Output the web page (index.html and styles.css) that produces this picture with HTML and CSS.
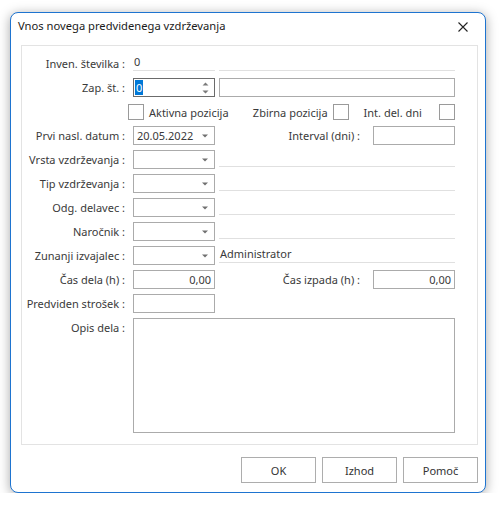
FILE: index.html
```html
<!DOCTYPE html>
<html lang="sl">
<head>
    <meta charset="UTF-8">
    <meta name="viewport" content="width=device-width, initial-scale=1.0">
    <title>Vnos novega predvidenega vzdrževanja</title>
    <link rel="stylesheet" href="styles.css">
</head>
<body>
    <div class="window">
        <!-- Title bar -->
        <div class="titlebar">
            <span class="title">Vnos novega predvidenega vzdrževanja</span>
            <svg class="close" width="10" height="10" viewBox="0 0 10 10">
                <path d="M0.5 0.5 L9.5 9.5 M9.5 0.5 L0.5 9.5" stroke="#222" stroke-width="1.1" fill="none"/>
            </svg>
        </div>

        <!-- Form -->
        <div class="panel">
            <div class="row">
                <span class="label">Inven. številka :</span>
                <span class="field short">0</span>
                <span class="field long"></span>
            </div>

            <div class="row">
                <span class="label">Zap. št. :</span>
                <div class="input short focus">
                    <span class="sel">0</span>
                    <svg class="spin" width="7" height="12" viewBox="0 0 7 12">
                        <path d="M3.5 0.5 L6.5 3.5 L0.5 3.5 Z M0.5 8.5 L6.5 8.5 L3.5 11.5 Z" fill="#7a7a7a"/>
                    </svg>
                </div>
                <div class="input long"></div>
            </div>

            <div class="row checks">
                <div class="check-item first">
                    <span class="box"></span>
                    <span class="check-text">Aktivna pozicija</span>
                </div>
                <div class="check-item second">
                    <span class="check-text">Zbirna pozicija</span>
                    <span class="box"></span>
                </div>
                <div class="check-item third">
                    <span class="check-text">Int. del. dni</span>
                    <span class="box"></span>
                </div>
            </div>

            <div class="row">
                <span class="label">Prvi nasl. datum :</span>
                <div class="input short combo">
                    <span class="value">20.05.2022</span>
                    <svg class="arrow" width="6" height="4" viewBox="0 0 6 4"><path d="M0 0.5 H6 L3 3.5 Z" fill="#707070"/></svg>
                </div>
                <span class="label side">Interval (dni) :</span>
                <div class="input short"></div>
            </div>

            <div class="row">
                <span class="label">Vrsta vzdrževanja :</span>
                <div class="input short combo">
                    <span class="value"></span>
                    <svg class="arrow" width="6" height="4" viewBox="0 0 6 4"><path d="M0 0.5 H6 L3 3.5 Z" fill="#707070"/></svg>
                </div>
                <span class="field long"></span>
            </div>

            <div class="row">
                <span class="label">Tip vzdrževanja :</span>
                <div class="input short combo">
                    <span class="value"></span>
                    <svg class="arrow" width="6" height="4" viewBox="0 0 6 4"><path d="M0 0.5 H6 L3 3.5 Z" fill="#707070"/></svg>
                </div>
                <span class="field long"></span>
            </div>

            <div class="row">
                <span class="label">Odg. delavec :</span>
                <div class="input short combo">
                    <span class="value"></span>
                    <svg class="arrow" width="6" height="4" viewBox="0 0 6 4"><path d="M0 0.5 H6 L3 3.5 Z" fill="#707070"/></svg>
                </div>
                <span class="field long"></span>
            </div>

            <div class="row">
                <span class="label">Naročnik :</span>
                <div class="input short combo">
                    <span class="value"></span>
                    <svg class="arrow" width="6" height="4" viewBox="0 0 6 4"><path d="M0 0.5 H6 L3 3.5 Z" fill="#707070"/></svg>
                </div>
                <span class="field long"></span>
            </div>

            <div class="row">
                <span class="label">Zunanji izvajalec :</span>
                <div class="input short combo">
                    <span class="value"></span>
                    <svg class="arrow" width="6" height="4" viewBox="0 0 6 4"><path d="M0 0.5 H6 L3 3.5 Z" fill="#707070"/></svg>
                </div>
                <span class="field long">Administrator</span>
            </div>

            <div class="row">
                <span class="label">Čas dela (h) :</span>
                <div class="input short num">0,00</div>
                <span class="label side">Čas izpada (h) :</span>
                <div class="input short num">0,00</div>
            </div>

            <div class="row">
                <span class="label">Predviden strošek :</span>
                <div class="input short"></div>
            </div>

            <div class="row memo-row">
                <span class="label">Opis dela :</span>
                <div class="memo"></div>
            </div>
        </div>

        <!-- Dialog buttons -->
        <div class="buttons">
            <button class="btn">OK</button>
            <button class="btn">Izhod</button>
            <button class="btn">Pomoč</button>
        </div>
    </div>
</body>
</html>
```

FILE: styles.css
```css
/* Page */
body {
    margin: 0;
    padding: 12px 0 0 10px;
    background-color: #fff;
    font-family: "Noto Sans", "Open Sans", sans-serif;
    font-size: 11px;
    color: #3a3a3a;
}

/* Dialog window */
.window {
    box-sizing: border-box;
    width: 476px;
    height: 481px;
    border: 1px solid #1e74d0;
    border-radius: 8px;
    background-color: #fff;
    box-shadow: 0 2px 12px rgba(0, 0, 0, 0.35);
    display: flex;
    flex-direction: column;
}

.titlebar {
    height: 32px;
    display: flex;
    justify-content: space-between;
    align-items: flex-start;
    padding: 5px 0 0 7px;
    box-sizing: border-box;
}

.title {
    font-size: 11.2px;
    line-height: 16px;
    color: #1a1a1a;
}

.close {
    margin: 4px 17px 0 0;
}

/* Form panel */
.panel {
    box-sizing: border-box;
    height: 400px;
    margin: 0 7px 0 10px;
    border: 1px solid #e3e3e3;
    padding: 8px 22px 0 0;
    display: flex;
    flex-direction: column;
    gap: 4px;
}

.row {
    height: 20px;
    display: flex;
    align-items: flex-start;
}

.label {
    width: 103px;
    flex-shrink: 0;
    text-align: right;
    line-height: 19px;
    margin-right: 8px;
    white-space: nowrap;
}

.label.side {
    width: auto;
    flex: 1;
    margin-right: 13px;
}

/* Read-only fields with an underline */
.field {
    box-sizing: border-box;
    height: 17px;
    border-bottom: 1px solid #e0e0e0;
    line-height: 16px;
    padding-left: 1px;
    white-space: nowrap;
}

.short {
    width: 82px;
    flex-shrink: 0;
}

.long {
    width: 236px;
    margin-left: 4px;
}

/* Edit boxes */
.input {
    box-sizing: border-box;
    height: 19px;
    border: 1px solid #ababab;
    background-color: #fff;
    line-height: 17px;
    padding: 0 3px;
    display: flex;
    align-items: center;
    justify-content: space-between;
}

.input.focus {
    border-color: #6b6b6b;
    padding-left: 1px;
    padding-right: 5px;
}

.sel {
    background-color: #0078d7;
    color: #fff;
    line-height: 15px;
    padding: 0 1px;
}

.combo {
    padding-right: 6px;
}

.num {
    justify-content: flex-end;
    padding-right: 3px;
}

.memo {
    box-sizing: border-box;
    width: 322px;
    height: 115px;
    border: 1px solid #ababab;
}

.memo-row {
    height: 115px;
}

/* Check boxes */
.checks {
    align-items: center;
}

.check-item {
    display: flex;
    align-items: center;
}

.check-item.first {
    margin-left: 106px;
    width: 125px;
}

.check-item.second {
    width: 97px;
    justify-content: flex-end;
}

.check-item.third {
    width: 107px;
    padding-left: 15px;
    box-sizing: border-box;
    justify-content: space-between;
}

.box {
    box-sizing: border-box;
    width: 16px;
    height: 16px;
    border: 1px solid #9a9a9a;
    background-color: #fff;
}

.first .box {
    margin-right: 5px;
}

.second .box {
    margin-left: 5px;
}

/* Buttons */
.buttons {
    display: flex;
    justify-content: flex-end;
    gap: 6px;
    margin: 12px 7px 0 0;
}

.btn {
    width: 75px;
    height: 26px;
    border: 1px solid #adadad;
    background-color: #fff;
    font-family: inherit;
    font-size: 11px;
    color: #333;
    padding: 0;
}
```
